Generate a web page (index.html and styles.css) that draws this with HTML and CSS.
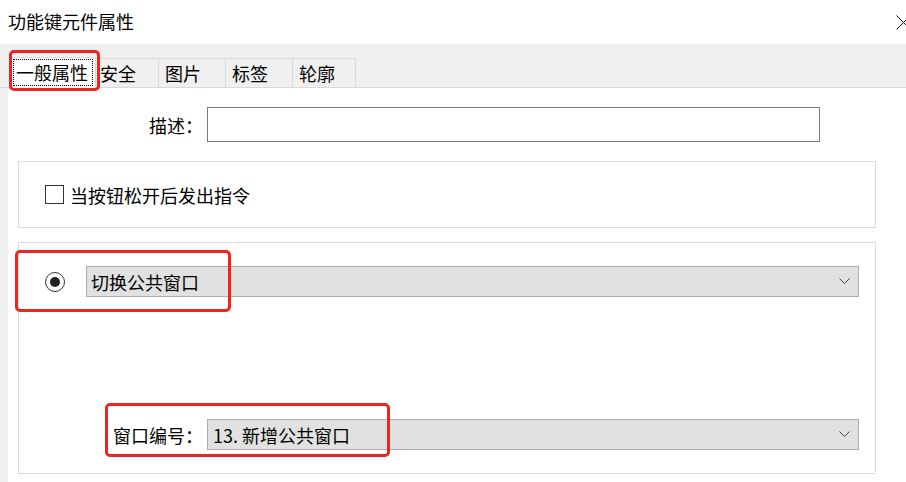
FILE: index.html
```html
<!DOCTYPE html>
<html>
<head>
    <title>功能键元件属性</title>
    <link rel="stylesheet" href="styles.css">
</head>
<body>
    <div class="dialog">
        <div class="titlebar">
            <span class="title">功能键元件属性</span>
            <svg class="close" width="10" height="15" viewBox="0 0 10 15">
                <path d="M0.5 0.5 L15 15 M0.5 14.5 L15 0" stroke="#111" stroke-width="1" fill="none"/>
            </svg>
        </div>

        <div class="body-area">
            <div class="tabstrip">
                <div class="tab selected"><span class="focus">一般属性</span></div>
                <div class="tab first">安全</div>
                <div class="tab">图片</div>
                <div class="tab">标签</div>
                <div class="tab last">轮廓</div>
            </div>

            <div class="panel">
                <div class="desc-row">
                    <label class="desc-label" for="desc">描述：</label>
                    <input class="text-input" type="text" id="desc">
                </div>

                <div class="group group-check">
                    <span class="checkbox"></span>
                    <span class="check-text">当按钮松开后发出指令</span>
                </div>

                <div class="group group-window">
                    <div class="radio-row">
                        <span class="radio"><span class="radio-dot"></span></span>
                        <div class="combo combo-wide">
                            <span>切换公共窗口</span>
                            <svg class="chevron" width="11" height="7" viewBox="0 0 11 7">
                                <path d="M0.5 0.5 L5.5 5.5 L10.5 0.5" stroke="#444" stroke-width="1" fill="none"/>
                            </svg>
                        </div>
                    </div>
                    <div class="number-row">
                        <span class="number-label">窗口编号：</span>
                        <div class="combo combo-number">
                            <span>13. 新增公共窗口</span>
                            <svg class="chevron" width="11" height="7" viewBox="0 0 11 7">
                                <path d="M0.5 0.5 L5.5 5.5 L10.5 0.5" stroke="#444" stroke-width="1" fill="none"/>
                            </svg>
                        </div>
                    </div>
                </div>
            </div>
        </div>

        <!-- red annotation marks -->
        <div class="mark mark-tab"></div>
        <div class="mark mark-radio"></div>
        <div class="mark mark-number"></div>
    </div>
</body>
</html>
```

FILE: styles.css
```css
body {
    margin: 0;
    background-color: #ffffff;
    font-family: "Noto Sans CJK SC", "Microsoft YaHei", sans-serif;
    font-size: 18px;
    color: #000000;
    overflow: hidden;
}

.dialog {
    position: relative;
    width: 906px;
    height: 482px;
    overflow: hidden;
}

.titlebar {
    height: 44px;
    display: flex;
    align-items: center;
    justify-content: space-between;
    padding-left: 8px;
    box-sizing: border-box;
}

.title {
    line-height: 20px;
    margin-top: -3px;
}

.close {
    margin-top: 0;
}

.body-area {
    background-color: #f0f0f0;
}

.tabstrip {
    height: 44px;
    background-color: #f0f0f0;
    border-bottom: 1px solid #d9d9d9;
    box-sizing: border-box;
    display: flex;
    align-items: flex-end;
    padding-left: 10px;
}

.tab {
    height: 29px;
    line-height: 29px;
    padding-left: 6px;
    box-sizing: border-box;
    border-top: 1px solid #d9d9d9;
    border-right: 1px solid #d9d9d9;
    width: 67px;
}

.tab.first {
    width: 63px;
    padding-left: 4px;
}

.tab.last {
    width: 63px;
}

.tab.selected {
    width: 86px;
    height: 31px;
    margin-bottom: -1px;
    background-color: #ffffff;
    border-left: 1px solid #d9d9d9;
    padding: 1px 0 0 2px;
    line-height: 27px;
}

.focus {
    display: block;
    width: 80px;
    height: 27px;
    box-sizing: border-box;
    border: 1px dotted #000000;
    padding-left: 2px;
    line-height: 24px;
}

.panel {
    margin-left: 8px;
    background-color: #ffffff;
    padding: 19px 0 0 10px;
    height: 394px;
    box-sizing: border-box;
}

.desc-row {
    display: flex;
    align-items: center;
    gap: 4px;
    margin-left: -10px;
}

.desc-label {
    width: 195px;
    text-align: right;
    line-height: 20px;
}

.text-input {
    width: 613px;
    height: 35px;
    box-sizing: border-box;
    border: 1px solid #7a7a7a;
    margin: 0;
    padding: 0;
    outline: none;
}

.group {
    width: 858px;
    box-sizing: border-box;
    border: 1px solid #dcdcdc;
}

.group-check {
    margin-top: 19px;
    height: 67px;
    display: flex;
    align-items: center;
    padding-left: 26px;
}

.checkbox {
    width: 19px;
    height: 19px;
    box-sizing: border-box;
    border: 1px solid #333333;
    margin-right: 6px;
}

.check-text {
    line-height: 20px;
}

.group-window {
    margin-top: 14px;
    height: 232px;
    padding: 23px 16px 23px 26px;
    display: flex;
    flex-direction: column;
    justify-content: space-between;
}

.radio-row {
    display: flex;
    align-items: center;
}

.radio {
    width: 20px;
    height: 20px;
    box-sizing: border-box;
    border: 1px solid #333333;
    border-radius: 50%;
    margin-right: 21px;
    display: flex;
    align-items: center;
    justify-content: center;
}

.radio-dot {
    width: 10px;
    height: 10px;
    border-radius: 50%;
    background-color: #222222;
}

.combo {
    height: 31px;
    box-sizing: border-box;
    background-color: #e1e1e1;
    border: 1px solid #adadad;
    display: flex;
    align-items: center;
    justify-content: space-between;
    padding: 0 8px 0 4px;
    line-height: 20px;
}

.combo-wide {
    width: 773px;
}

.combo-number {
    width: 652px;
    padding-left: 5px;
}

.number-row {
    display: flex;
    align-items: center;
    gap: 4px;
    margin-left: -26px;
}

.number-label {
    width: 184px;
    text-align: right;
    line-height: 20px;
}

.mark {
    position: absolute;
    border: 3px solid #f0241c;
    border-radius: 5px;
    box-sizing: border-box;
}

.mark-tab {
    left: 9px;
    top: 50px;
    width: 91px;
    height: 41px;
}

.mark-radio {
    left: 15px;
    top: 250px;
    width: 216px;
    height: 62px;
}

.mark-number {
    left: 105px;
    top: 403px;
    width: 285px;
    height: 54px;
}
```
